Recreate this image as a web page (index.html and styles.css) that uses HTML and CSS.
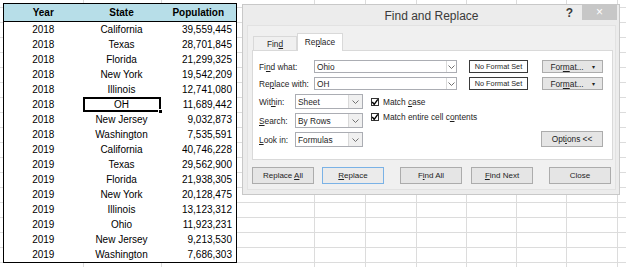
FILE: index.html
```html
<!DOCTYPE html>
<html lang="en">
<head>
    <meta charset="UTF-8" />
    <title>Find and Replace</title>
    <link rel="stylesheet" href="styles.css">
</head>
<body>

    <div class="sheet">
        <table class="data">
            <colgroup><col class="c-year"><col class="c-state"><col class="c-pop"></colgroup>
            <tr><th>Year</th><th>State</th><th>Population</th></tr>
            <tr><td>2018</td><td>California</td><td class="num">39,559,445</td></tr>
            <tr><td>2018</td><td>Texas</td><td class="num">28,701,845</td></tr>
            <tr><td>2018</td><td>Florida</td><td class="num">21,299,325</td></tr>
            <tr><td>2018</td><td>New York</td><td class="num">19,542,209</td></tr>
            <tr><td>2018</td><td>Illinois</td><td class="num">12,741,080</td></tr>
            <tr><td>2018</td><td class="sel">OH</td><td class="num">11,689,442</td></tr>
            <tr><td>2018</td><td>New Jersey</td><td class="num">9,032,873</td></tr>
            <tr><td>2018</td><td>Washington</td><td class="num">7,535,591</td></tr>
            <tr><td>2019</td><td>California</td><td class="num">40,746,228</td></tr>
            <tr><td>2019</td><td>Texas</td><td class="num">29,562,900</td></tr>
            <tr><td>2019</td><td>Florida</td><td class="num">21,938,305</td></tr>
            <tr><td>2019</td><td>New York</td><td class="num">20,128,475</td></tr>
            <tr><td>2019</td><td>Illinois</td><td class="num">13,123,312</td></tr>
            <tr><td>2019</td><td>Ohio</td><td class="num">11,923,231</td></tr>
            <tr><td>2019</td><td>New Jersey</td><td class="num">9,213,530</td></tr>
            <tr><td>2019</td><td>Washington</td><td class="num">7,686,303</td></tr>
        </table>
    </div>

    <!-- Ventana flotante: Find and Replace -->
    <div class="dialog">
        <div class="titlebar">
            <span></span>
            <div class="title">Find and Replace</div>
            <div class="controls">
                <span class="help">?</span>
                <span class="close">&#215;</span>
            </div>
        </div>

        <div class="client">
            <div class="tabs">
                <div class="tab">Fin<u>d</u></div>
                <div class="tab active">Re<u>p</u>lace</div>
            </div>

            <div class="panel">
                <div class="field-row">
                    <span class="lbl wide">Fi<u>n</u>d what:</span>
                    <div class="combo text">
                        <span class="val">Ohio</span>
                        <span class="drop"><svg width="7" height="4" viewBox="0 0 7 4"><path d="M0.5 0.5 L3.5 3.5 L6.5 0.5" fill="none" stroke="#707070"/></svg></span>
                    </div>
                    <div class="nofmt">No Format Set</div>
                    <div class="btn fmt"><span>For<u>m</u>at...</span><span class="caret">&#9662;</span></div>
                </div>
                <div class="field-row">
                    <span class="lbl wide">Re<u>p</u>lace with:</span>
                    <div class="combo text">
                        <span class="val">OH</span>
                        <span class="drop"><svg width="7" height="4" viewBox="0 0 7 4"><path d="M0.5 0.5 L3.5 3.5 L6.5 0.5" fill="none" stroke="#707070"/></svg></span>
                    </div>
                    <div class="nofmt">No Format Set</div>
                    <div class="btn fmt"><span>For<u>m</u>at...</span><span class="caret">&#9662;</span></div>
                </div>

                <div class="options">
                    <div class="opt-col">
                        <div class="opt-row">
                            <span class="lbl">Wit<u>h</u>in:</span>
                            <div class="combo list">
                                <span class="val">Sheet</span>
                                <span class="drop"><svg width="7" height="4" viewBox="0 0 7 4"><path d="M0.5 0.5 L3.5 3.5 L6.5 0.5" fill="none" stroke="#707070"/></svg></span>
                            </div>
                        </div>
                        <div class="opt-row">
                            <span class="lbl"><u>S</u>earch:</span>
                            <div class="combo list">
                                <span class="val">By Rows</span>
                                <span class="drop"><svg width="7" height="4" viewBox="0 0 7 4"><path d="M0.5 0.5 L3.5 3.5 L6.5 0.5" fill="none" stroke="#707070"/></svg></span>
                            </div>
                        </div>
                        <div class="opt-row">
                            <span class="lbl"><u>L</u>ook in:</span>
                            <div class="combo list">
                                <span class="val">Formulas</span>
                                <span class="drop"><svg width="7" height="4" viewBox="0 0 7 4"><path d="M0.5 0.5 L3.5 3.5 L6.5 0.5" fill="none" stroke="#707070"/></svg></span>
                            </div>
                        </div>
                    </div>

                    <div class="checks">
                        <div class="check-row">
                            <span class="box"><svg width="8" height="8" viewBox="0 0 8 8"><path d="M1.2 4 L3.2 6.3 L6.8 1.3" fill="none" stroke="#000" stroke-width="1.4"/></svg></span>
                            <span>Match <u>c</u>ase</span>
                        </div>
                        <div class="check-row">
                            <span class="box"><svg width="8" height="8" viewBox="0 0 8 8"><path d="M1.2 4 L3.2 6.3 L6.8 1.3" fill="none" stroke="#000" stroke-width="1.4"/></svg></span>
                            <span>Match entire cell c<u>o</u>ntents</span>
                        </div>
                    </div>

                    <div class="btn options-btn"><span>Opt<u>i</u>ons &lt;&lt;</span></div>
                </div>
            </div>

            <div class="actions">
                <div class="btn"><span>Replace <u>A</u>ll</span></div>
                <div class="btn default"><span><u>R</u>eplace</span></div>
                <div class="btn wide-gap"><span>F<u>i</u>nd All</span></div>
                <div class="btn"><span><u>F</u>ind Next</span></div>
                <div class="btn wide-gap"><span>Close</span></div>
            </div>
        </div>
    </div>

</body>
</html>
```

FILE: styles.css
```css
body {
    margin: 0;
    width: 626px;
    height: 267px;
    overflow: hidden;
    position: relative;
    background-color: #fff;
    background-image:
        linear-gradient(to right,
            transparent 83px, #dcdcdc 83px 84px,
            transparent 84px 161px, #dcdcdc 161px 162px,
            transparent 162px 314px, #dcdcdc 314px 315px,
            transparent 315px 365px, #dcdcdc 365px 366px,
            transparent 366px 416px, #dcdcdc 416px 417px,
            transparent 417px 466px, #dcdcdc 466px 467px,
            transparent 467px 516px, #dcdcdc 516px 517px,
            transparent 517px 566px, #dcdcdc 566px 567px,
            transparent 567px 617px, #dcdcdc 617px 618px,
            transparent 618px),
        repeating-linear-gradient(to bottom,
            transparent 0 7px, #dcdcdc 7px 8px, transparent 8px 15px);
}

/* hoja de calculo */

.sheet {
    padding: 3px 0 0 3px;
}

.data {
    border-collapse: collapse;
    table-layout: fixed;
    border: 1px solid #000;
    background: #fff;
    font-family: "Liberation Sans", Arial, sans-serif;
    font-size: 10px;
    color: #000;
}

.c-year { width: 79px; }
.c-state { width: 78px; }
.c-pop { width: 76px; }

.data th {
    background: #b7dee8;
    height: 17px;
    padding: 0;
    border-bottom: 1px solid #000;
    font-weight: bold;
    text-align: center;
}

.data td {
    height: 15px;
    padding: 0;
    text-align: center;
    line-height: 15px;
}

.data td.num {
    text-align: right;
    padding-right: 4px;
}

.data td.sel {
    outline: 2px solid #000;
    outline-offset: -2px;
    position: relative;
}

.data td.sel::after {
    content: "";
    position: absolute;
    right: -2px;
    bottom: -2px;
    width: 3px;
    height: 3px;
    background: #000;
    border: 1px solid #fff;
}

/* dialogo */

.dialog {
    position: absolute;
    left: 242px;
    top: 4px;
    width: 378px;
    height: 191px;
    box-sizing: border-box;
    display: flex;
    flex-direction: column;
    padding: 0 3px 4px 4px;
    background: #ececec;
    border: 1px solid #c8c8c8;
    font-family: "Liberation Sans", Arial, sans-serif;
    font-size: 8.3px;
    color: #1e1e1e;
}

.titlebar {
    height: 20px;
    display: grid;
    grid-template-columns: 1fr auto 1fr;
}

.title {
    font-size: 12px;
    color: #3a3a3a;
    line-height: 23px;
}

.controls {
    justify-self: end;
    display: flex;
    align-items: flex-start;
}

.help {
    font-size: 12px;
    font-weight: bold;
    color: #3a3a3a;
    line-height: 16px;
    margin-right: 9px;
}

.close {
    width: 35px;
    height: 16px;
    margin: -1px -1px 0 0;
    background: #c7c7c7;
    color: #fff;
    font-size: 12px;
    line-height: 16px;
    text-align: center;
}

.client {
    flex: 1;
    background: #f0f0f0;
    border: 1px solid #e2e2e2;
    padding: 7px 2px 5px 4px;
}

.tabs {
    display: flex;
    align-items: flex-end;
    height: 17px;
    padding-left: 1px;
}

.tab {
    box-sizing: border-box;
    width: 44px;
    height: 14px;
    border: 1px solid #d9d9d9;
    border-bottom: none;
    background: #f0f0f0;
    text-align: center;
    line-height: 14px;
}

.tab.active {
    width: 46px;
    height: 18px;
    margin-bottom: -1px;
    position: relative;
    background: #fff;
    line-height: 16px;
}

.panel {
    box-sizing: border-box;
    height: 110px;
    background: #fff;
    border: 1px solid #d9d9d9;
    padding: 9px 9px 0 6px;
}

.field-row {
    display: flex;
    align-items: center;
    height: 13px;
    margin-bottom: 4px;
}

.lbl {
    width: 36px;
}

.lbl.wide {
    width: 55px;
}

.combo {
    box-sizing: border-box;
    display: flex;
    align-items: center;
    height: 100%;
    background: #fff;
    border: 1px solid #abadb3;
}

.combo.text {
    width: 143px;
}

.combo.list {
    width: 68px;
    height: 15px;
}

.val {
    flex: 1;
    padding-left: 2px;
}

.drop {
    width: 9px;
    align-self: stretch;
    display: flex;
    align-items: center;
    justify-content: center;
    border-left: 1px solid #dadada;
}

.combo.list .drop {
    width: 13px;
    background: #f0f0f0;
}

.nofmt {
    box-sizing: border-box;
    width: 59px;
    height: 13px;
    margin-left: 12px;
    border: 1px solid #3a3a3a;
    background: #fff;
    text-align: center;
    line-height: 11px;
    font-size: 7.3px;
    white-space: nowrap;
}

.btn {
    box-sizing: border-box;
    display: flex;
    align-items: center;
    justify-content: center;
    border: 1px solid #acacac;
    background: #e5e5e5;
    white-space: nowrap;
}

.btn.fmt {
    width: 61px;
    height: 13px;
    margin-left: 14px;
}

.caret {
    font-size: 6px;
    margin-left: 8px;
}

.options {
    display: flex;
    margin-top: 4px;
}

.opt-col {
    display: flex;
    flex-direction: column;
    gap: 4px;
}

.opt-row {
    display: flex;
    align-items: center;
    height: 15px;
}

.checks {
    margin-left: 8px;
    display: flex;
    flex-direction: column;
}

.check-row {
    display: flex;
    align-items: center;
    height: 15px;
    white-space: nowrap;
}

.box {
    box-sizing: border-box;
    width: 8px;
    height: 8px;
    margin-right: 4px;
    border: 1px solid #333;
    background: #fff;
    display: flex;
    align-items: center;
    justify-content: center;
}

.box svg {
    flex: none;
}

.options-btn {
    margin-left: auto;
    align-self: flex-end;
    width: 62px;
    height: 16px;
}

.actions {
    display: flex;
    margin-top: 7px;
    font-size: 8px;
}

.actions .btn {
    width: 62px;
    height: 17px;
    margin-left: 8px;
}

.actions .btn:first-child {
    margin-left: 0;
}

.actions .btn.wide-gap {
    margin-left: 16px;
}

.actions .btn:nth-child(4) {
    margin-left: 9px;
}

.btn.default {
    border-color: #7ab2e6;
    background: #ebebeb;
}
```
